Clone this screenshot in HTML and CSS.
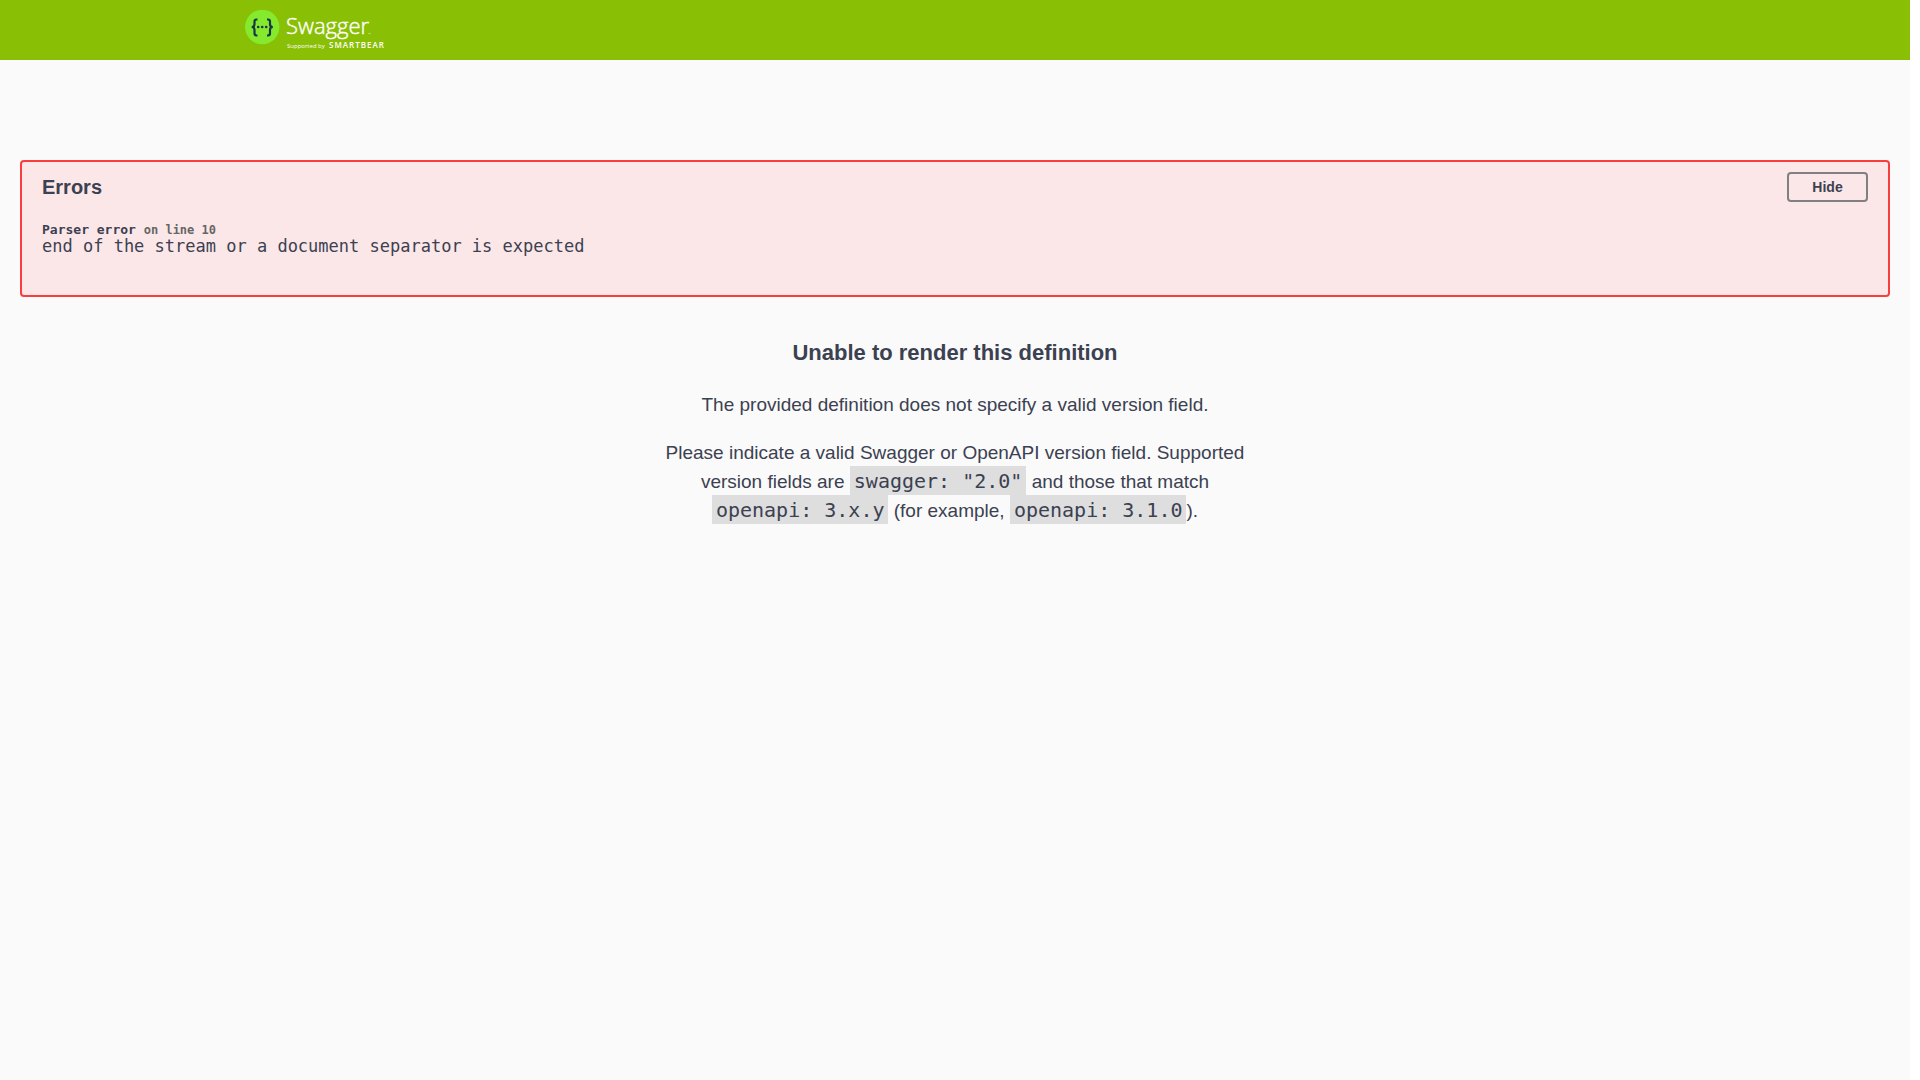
FILE: index.html
```
<!DOCTYPE html>
<html lang="en">
<head>
<meta charset="utf-8">
<meta name="viewport" content="width=device-width, initial-scale=1">
<title>Swagger UI</title>
<link rel="stylesheet" href="styles.css">
</head>
<body>
<div class="page">
  <header class="topbar">
    <div class="topbar-inner">
      <a class="logo-link" href="#" aria-label="Swagger, supported by SmartBear">
        <svg class="logo" viewBox="0 0 144 40">
          <circle cx="17.200" cy="17" r="17.200" fill="#85ea2d"/>
          <g fill="none" stroke="#173647" stroke-width="2.200">
            <path d="M12.500 9.500h-1q-2 0-2 2v2.700q0 2.800-2.800 2.800q2.800 0 2.800 2.800v3.500q0 2.200 2 2.200h1"/>
            <path d="M22 9.500h1q2 0 2 2v2.700q0 2.800 2.800 2.800q-2.800 0-2.800 2.800v3.500q0 2.200-2 2.200h-1"/>
          </g>
          <g fill="#173647">
            <circle cx="13.200" cy="17" r="1.300"/><circle cx="17.200" cy="17" r="1.300"/><circle cx="21.200" cy="17" r="1.300"/>
          </g>
          <text class="logo-name" x="41" y="24">Swagger</text>
          <path d="M123.500 23.500h2" stroke="#fff" stroke-opacity=".5"/>
          <text class="logo-by" x="42" y="38">Supported by</text>
          <text class="logo-owner" x="84" y="38">SMARTBEAR</text>
        </svg>
      </a>
    </div>
  </header>
  <main class="content">
    <section class="errors">
      <div class="errors-head">
        <h4 class="errors-title">Errors</h4>
        <button class="btn" type="button">Hide</button>
      </div>
      <div class="error">
        <h4 class="error-name">Parser error <small class="error-line">on line 10</small></h4>
        <span class="error-message">end of the stream or a document separator is expected</span>
      </div>
    </section>
    <section class="version-message">
      <h3 class="version-title">Unable to render this definition</h3>
      <p>The provided definition does not specify a valid version field.</p>
      <p>Please indicate a valid Swagger or OpenAPI version field. Supported version fields are <code>swagger: "2.0"</code> and those that match <code>openapi: 3.x.y</code> (for example, <code>openapi: 3.1.0</code>).</p>
    </section>
  </main>
</div>
</body>
</html>
```
FILE: styles.css
```
* { box-sizing: border-box; }
body {
  margin: 0;
  background: #fff;
  color: #3b4151;
  font-family: "Liberation Sans", Arial, sans-serif;
}
.page {
  min-height: 100vh;
  margin-right: 10px;
  background: #fafafa;
}
.topbar { background: #89bf04; padding: 10px 0; }
.topbar-inner {
  max-width: 1460px;
  margin: 0 auto;
  padding: 0 20px;
}
.logo-link { display: block; width: 144px; }
.logo { display: block; width: 144px; height: 40px; }
.logo-name { font: 300 22px "Open Sans", sans-serif; fill: #fff; stroke: #fff; stroke-width: .4; }
.logo-by { font: 400 6px "Open Sans", sans-serif; fill: #fff; }
.logo-owner { font: 600 8px "Open Sans", sans-serif; fill: #fff; letter-spacing: 1px; }
.content { padding: 100px 20px 0; }
.errors {
  border: 2px solid #f93e3e;
  border-radius: 4px;
  background: #fbe7e8;
  padding: 10px 20px 40px;
}
.errors-head { display: flex; align-items: center; justify-content: space-between; }
.errors-title { margin: 0; font-size: 20px; }
.btn {
  width: 81px;
  height: 30px;
  padding: 0;
  border: 2px solid gray;
  border-radius: 4px;
  background: transparent;
  color: #3b4151;
  font: bold 14px "Liberation Sans", Arial, sans-serif;
}
.error { padding-top: 20px; font-family: "DejaVu Sans Mono", monospace; }
.error-name { margin: 0; font-size: 13px; line-height: 16px; }
.error-line { font-size: 12px; line-height: 1; color: #666; }
.error-message { display: block; font-size: 17px; line-height: 17px; }
.version-message {
  max-width: 600px;
  margin: 0 auto;
  padding-top: 42px;
  text-align: center;
  font-size: 19px;
  line-height: 28px;
}
.version-title { margin: 0 0 24px; font-size: 22px; }
.version-message p { margin: 0 0 20px; }
.version-message code {
  padding: 3px 4px 2px;
  background: #dedede;
  font-family: "DejaVu Sans Mono", monospace;
  font-size: 20px;
}
```
